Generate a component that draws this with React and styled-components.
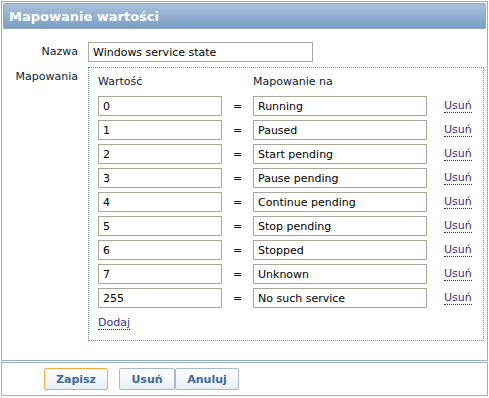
import styled, { createGlobalStyle } from "styled-components";

const Global = createGlobalStyle`
    html, body {
        margin: 0;
        padding: 0;
        background: #ffffff;
    }
    body {
        font-family: "DejaVu Sans", Verdana, sans-serif;
        font-size: 11px;
        color: #0b1a33;
    }
`;

const Page = styled.div`
    width: 489px;
    height: 398px;
    padding: 1px;
    box-sizing: border-box;
    display: flex;
    flex-direction: column;
    gap: 1px;
`;

const Window = styled.div`
    border: 1px solid #98aec9;
    padding: 1px;
    height: 360px;
    box-sizing: border-box;
    display: flex;
    flex-direction: column;
`;

const Header = styled.div`
    height: 26px;
    border: 1px solid #8ba8c9;
    border-radius: 2px 2px 0 0;
    background: linear-gradient(#a9c1da, #7a9ec5);
    color: #ffffff;
    font-weight: bold;
    font-size: 13px;
    display: flex;
    align-items: center;
    padding-left: 5px;
    box-sizing: border-box;
`;

const Form = styled.div`
    display: grid;
    grid-template-columns: 75px 1fr;
    column-gap: 10px;
    row-gap: 5px;
    padding: 13px 2px 0 0;
`;

const Label = styled.div`
    text-align: right;
    padding-top: ${(p) => p.$top || 0}px;
    line-height: ${(p) => (p.$top ? "normal" : "20px")};
`;

const TextInput = styled.input`
    height: 20px;
    width: ${(p) => p.$w}px;
    box-sizing: border-box;
    border: 1px solid #aaa79c;
    padding: 0 4px;
    font-family: inherit;
    font-size: 11px;
    color: #000;
    outline: none;
    background: #fff;
`;

const MapBox = styled.div`
    border: 1px dotted #6c8cc5;
    padding: 7px 0 11px 9px;
`;

const MapRow = styled.div`
    display: grid;
    grid-template-columns: 124px 31px 174px auto;
    align-items: center;
    height: 20px;
    margin-bottom: 4px;
`;

const ColHead = styled.div`
    height: 18px;
    margin-bottom: 3px;
    display: grid;
    grid-template-columns: 155px auto;
`;

const Eq = styled.div`
    text-align: center;
`;

const LinkText = styled.a`
    color: #3a2f8f;
    text-decoration: none;
    border-bottom: 1px dotted #2a2580;
    justify-self: start;
    margin-left: ${(p) => p.$ml || 0}px;
    line-height: 13px;
    cursor: pointer;
`;

const AddRow = styled.div`
    padding-top: 4px;
`;

const Footer = styled.div`
    border: 1px solid #98aec9;
    height: 34px;
    box-sizing: border-box;
    display: flex;
    align-items: center;
    padding-left: 42px;
    gap: 11px;
`;

const Group = styled.div`
    display: flex;
`;

const Button = styled.button`
    height: 22px;
    width: ${(p) => p.$w}px;
    padding: 0;
    font-family: inherit;
    font-size: 11px;
    font-weight: bold;
    color: #3d6a9a;
    background: linear-gradient(#ffffff, #e8eef5);
    border: 1px solid ${(p) => (p.$primary ? "#f6a93c" : "#a4b8cf")};
    border-radius: 2px;
    cursor: pointer;
`;

const rows = [
    ["0", "Running"],
    ["1", "Paused"],
    ["2", "Start pending"],
    ["3", "Pause pending"],
    ["4", "Continue pending"],
    ["5", "Stop pending"],
    ["6", "Stopped"],
    ["7", "Unknown"],
    ["255", "No such service"],
];

export default function App() {
    return (
        <>
            <Global />
            <Page>
                <Window>
                    <Header>Mapowanie wartości</Header>
                    <Form>
                        <Label>Nazwa</Label>
                        <div>
                            <TextInput $w={225} defaultValue="Windows service state" />
                        </div>
                        <Label $top={3}>Mapowania</Label>
                        <MapBox>
                            <ColHead>
                                <span>Wartość</span>
                                <span>Mapowanie na</span>
                            </ColHead>
                            {rows.map(([v, m]) => (
                                <MapRow key={v}>
                                    <TextInput $w={124} defaultValue={v} />
                                    <Eq>=</Eq>
                                    <TextInput $w={174} defaultValue={m} />
                                    <LinkText $ml={17}>Usuń</LinkText>
                                </MapRow>
                            ))}
                            <AddRow>
                                <LinkText>Dodaj</LinkText>
                            </AddRow>
                        </MapBox>
                    </Form>
                </Window>
                <Footer>
                    <Button $primary $w={64}>Zapisz</Button>
                    <Group>
                        <Button $w={56}>Usuń</Button>
                        <Button $w={64}>Anuluj</Button>
                    </Group>
                </Footer>
            </Page>
        </>
    );
}
